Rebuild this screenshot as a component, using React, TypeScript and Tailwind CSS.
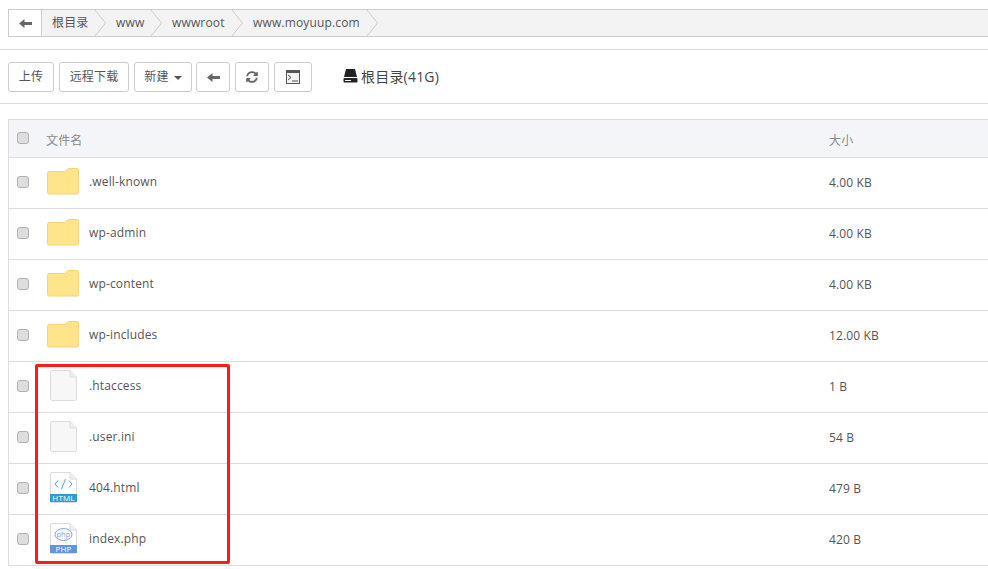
import { FaSyncAlt } from 'react-icons/fa';

interface FileRow {
  name: string;
  size: string;
  kind: 'folder' | 'blank' | 'html' | 'php';
}

const rows: FileRow[] = [
  { name: '.well-known', size: '4.00 KB', kind: 'folder' },
  { name: 'wp-admin', size: '4.00 KB', kind: 'folder' },
  { name: 'wp-content', size: '4.00 KB', kind: 'folder' },
  { name: 'wp-includes', size: '12.00 KB', kind: 'folder' },
  { name: '.htaccess', size: '1 B', kind: 'blank' },
  { name: '.user.ini', size: '54 B', kind: 'blank' },
  { name: '404.html', size: '479 B', kind: 'html' },
  { name: 'index.php', size: '420 B', kind: 'php' },
];

const crumbs = [
  { label: '根目录', box: 'w-[53px] pl-[10px]' },
  { label: 'www', box: 'w-[56px] pl-[21px]' },
  { label: 'wwwroot', box: 'w-[81px] pl-[21px]' },
  { label: 'www.moyuup.com', box: 'w-[135px] pl-[21px]' },
];

function Checkbox() {
  return <span className="block w-[12px] h-[12px] rounded-[3px] border border-[#b0b0b0] bg-[#dedede]" />;
}

function BackArrow() {
  return (
    <svg width="13" height="9" viewBox="0 0 13 9" className="block">
      <path d="M0 4.5 L5.5 0 V3 H13 V6 H5.5 V9 Z" fill="#666" />
    </svg>
  );
}

function FileIcon({ kind }: { kind: FileRow['kind'] }) {
  if (kind === 'folder') {
    return (
      <svg width="32" height="27" viewBox="0 0 32 27" className="block">
        <path
          d="M.5 5.5 Q.5 3.5 2.5 3.5 H18 L20.5 1 Q21 .5 22 .5 H30 Q31.5 .5 31.5 2 V24.5 Q31.5 26 30 26 H2 Q.5 26 .5 24.5 Z"
          fill="#ffe48a"
          stroke="#f6d27a"
        />
      </svg>
    );
  }
  const outline = 'M2 .5 H20 L26.5 7 V28.5 Q26.5 30.5 24.5 30.5 H2 Q.5 30.5 .5 28.5 V2 Q.5 .5 2 .5 Z';
  return (
    <svg width="27" height="31" viewBox="0 0 27 31" className="block">
      <path d={outline} fill={kind === 'blank' ? '#f7f7f7' : '#fdfdfd'} stroke="#dcdcdc" />
      <path d="M20 .5 V7 H26.5" fill="#efefef" stroke="#dcdcdc" />
      {kind === 'html' && (
        <>
          <path d="M8 8.5 L5 12 L8 15.5 M19 8.5 L22 12 L19 15.5 M15.5 7 L11.5 17" fill="none" stroke="#4aa8d8" strokeWidth="1" />
          <rect x="0" y="22" width="27" height="8" fill="#2f9bd0" />
          <text x="13.5" y="28.7" textAnchor="middle" fontSize="8" fill="#fff" fontFamily="Open Sans, sans-serif">HTML</text>
        </>
      )}
      {kind === 'php' && (
        <>
          <ellipse cx="13.5" cy="11.5" rx="8.5" ry="6" fill="none" stroke="#7ea6de" />
          <text x="13.5" y="14" textAnchor="middle" fontSize="7.5" fill="#7ea6de" fontFamily="Open Sans, sans-serif">php</text>
          <rect x="0" y="22" width="27" height="8" fill="#6495d8" />
          <text x="13.5" y="28.7" textAnchor="middle" fontSize="8" fill="#fff" fontFamily="Open Sans, sans-serif">PHP</text>
        </>
      )}
    </svg>
  );
}

export default function App() {
  return (
    <div
      className="relative w-[988px] h-[569px] overflow-hidden bg-white text-[12px] tracking-[0.15px] text-[#555]"
      style={{ fontFamily: '"Open Sans", "Noto Sans CJK SC", sans-serif' }}
    >
      <div className="pt-[9px] pl-[8px]">
        <div className="flex h-[28px] border border-[#ccc] border-r-0 bg-[#f3f3f3]">
          <div className="flex w-[33px] items-center justify-center bg-white border-r border-[#ccc]">
            <BackArrow />
          </div>
          {crumbs.map((c) => (
            <div key={c.label} className={`relative flex items-center ${c.box}`}>
              <span className="whitespace-nowrap">{c.label}</span>
              <svg width="11" height="26" viewBox="0 0 11 26" className="absolute right-[-11px] top-0">
                <path d="M0 0 L10.5 13 L0 26" fill="#f3f3f3" stroke="#ccc" />
              </svg>
            </div>
          ))}
        </div>
      </div>

      <div className="mt-[12px] h-[55px] border-y border-[#ddd] pl-[8px] pt-[12px]">
        <div className="flex items-center gap-[5px]">
          <button className="h-[30px] w-[46px] rounded-[3px] border border-[#ccc]">上传</button>
          <button className="h-[30px] w-[70px] rounded-[3px] border border-[#ccc]">远程下载</button>
          <button className="h-[30px] w-[58px] rounded-[3px] border border-[#ccc] flex items-center justify-center gap-[5px]">
            新建
            <span className="border-x-[4px] border-x-transparent border-t-[4px] border-t-[#555] mt-[2px]" />
          </button>
          <button className="h-[30px] w-[34px] ml-[-1px] rounded-[3px] border border-[#ccc] flex items-center justify-center">
            <BackArrow />
          </button>
          <button className="h-[30px] w-[34px] rounded-[3px] border border-[#ccc] flex items-center justify-center">
            <FaSyncAlt className="w-[12px] h-[12px] text-[#666]" />
          </button>
          <button className="h-[30px] w-[38px] rounded-[3px] border border-[#ccc] flex items-center justify-center">
            <svg width="14" height="14" viewBox="0 0 14 14">
              <rect x=".5" y=".5" width="13" height="13" fill="#f4f4f4" stroke="#555" />
              <rect x="0" y="0" width="14" height="3" fill="#555" />
              <path d="M2 5 L5 7.5 L2 10" fill="none" stroke="#555" />
              <path d="M6 11 H12" stroke="#555" />
            </svg>
          </button>
          <div className="ml-[26px] mt-[-2px] flex items-center gap-[3px] text-[14px] tracking-[0.2px] text-[#444]">
            <svg width="15" height="14" viewBox="0 0 15 14">
              <path d="M3 0 H12 L14 8 H1 Z" fill="#222" />
              <rect x="0.5" y="9" width="14" height="4.5" rx="1" fill="#222" />
              <rect x="2" y="11" width="6" height="1" fill="#fff" />
            </svg>
            根目录(41G)
          </div>
        </div>
      </div>

      <div className="mt-[15px] ml-[8px] border-t border-l border-[#ddd]">
        <div className="flex items-center h-[38px] bg-[#f4f5f9] border-b border-[#ddd] text-[#888]">
          <div className="w-[37px] pl-[8px] mt-[-2px]">
            <Checkbox />
          </div>
          <div className="w-[783px] mt-[5px]">文件名</div>
          <div className="mt-[5px]">大小</div>
        </div>
        {rows.map((row) => (
          <div key={row.name} className="flex items-center h-[51px] border-b border-[#ddd]">
            <div className="w-[37px] pl-[8px] mt-[-2px]">
              <Checkbox />
            </div>
            <div className="w-[34px] flex justify-center mt-[-4px]">
              <FileIcon kind={row.kind} />
            </div>
            <div className="w-[749px] pl-[9px] mt-[-2px]">{row.name}</div>
            <div className="mt-[-1px]">{row.size}</div>
          </div>
        ))}
      </div>

      <div className="absolute left-[35px] top-[364px] w-[195px] h-[200px] border-[3px] border-[#fb1c14] rounded-[2px]" />
    </div>
  );
}
